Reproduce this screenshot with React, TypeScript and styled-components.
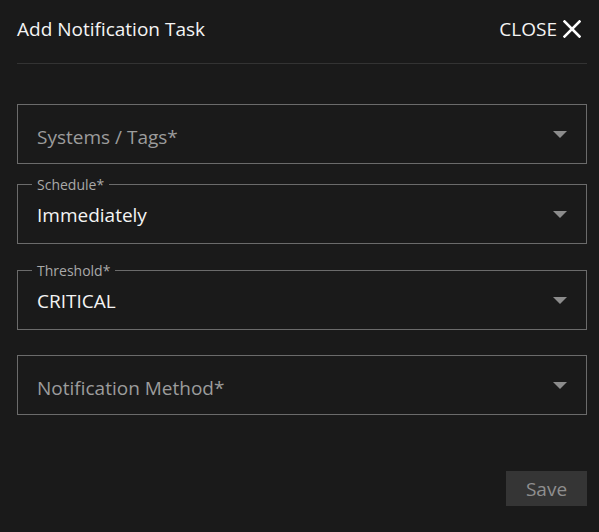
import React from 'react';
import styled, { createGlobalStyle } from 'styled-components';

const GlobalStyle = createGlobalStyle`
  html, body {
    margin: 0;
    padding: 0;
    background: #1a1a1a;
  }
  body {
    font-family: 'Open Sans', 'Noto Sans', sans-serif;
    color: #f2f2f2;
  }
`;

interface FieldProps {
  label?: string;
  placeholder: string;
  value?: string;
  top: number;
}

function SelectField({ label, placeholder, value, top }: FieldProps) {
  return (
    <FieldBox $top={top}>
      {label && <FloatingLabel>{label}</FloatingLabel>}
      <FieldText $filled={!!value}>{value || placeholder}</FieldText>
      <Caret viewBox="0 0 14 7" aria-hidden="true">
        <path d="M0 0h14L7 7z" fill="currentColor" />
      </Caret>
    </FieldBox>
  );
}

export default function App() {
  return (
    <>
      <GlobalStyle />
      <Dialog>
        <Header>
          <Title>Add Notification Task</Title>
          <CloseButton>
            CLOSE
            <CloseIcon viewBox="0 0 18 18" aria-hidden="true">
              <path
                d="M1.5 1.5l15 15M16.5 1.5l-15 15"
                stroke="currentColor"
                strokeWidth="2.6"
                strokeLinecap="square"
              />
            </CloseIcon>
          </CloseButton>
        </Header>
        <Form>
          <SelectField placeholder="Systems / Tags*" top={40} />
          <SelectField label="Schedule*" placeholder="Schedule*" value="Immediately" top={20} />
          <SelectField label="Threshold*" placeholder="Threshold*" value="CRITICAL" top={26} />
          <SelectField placeholder="Notification Method*" top={25} />
          <Actions>
            <SaveButton disabled>Save</SaveButton>
          </Actions>
        </Form>
      </Dialog>
    </>
  );
}

const Dialog = styled.div`
  width: 599px;
  height: 532px;
  box-sizing: border-box;
  padding: 0 12px 0 17px;
`;

const Header = styled.div`
  display: flex;
  align-items: center;
  justify-content: space-between;
  height: 58px;
  padding-bottom: 5px;
  border-bottom: 1px solid #333333;
`;

const Title = styled.h2`
  margin: 0;
  font-size: 19px;
  font-weight: 400;
  color: #f4f4f4;
`;

const CloseButton = styled.button`
  display: flex;
  align-items: center;
  gap: 6px;
  margin: 0 6px 0 0;
  padding: 0;
  border: none;
  background: none;
  font-family: inherit;
  font-size: 19px;
  color: #f4f4f4;
  cursor: pointer;
`;

const CloseIcon = styled.svg`
  width: 18px;
  height: 18px;
  color: #ffffff;
`;

const Form = styled.div`
  display: flex;
  flex-direction: column;
`;

const FieldBox = styled.div<{ $top: number }>`
  position: relative;
  display: flex;
  align-items: center;
  justify-content: space-between;
  height: 60px;
  box-sizing: border-box;
  margin-top: ${({ $top }) => $top}px;
  padding: 0 19px 0 19px;
  border: 1px solid #6b6b6b;
`;

const FloatingLabel = styled.span`
  position: absolute;
  top: -8px;
  left: 14px;
  padding: 0 5px;
  background: #1a1a1a;
  font-size: 14px;
  line-height: 16px;
  color: #a9a9a9;
`;

const FieldText = styled.span<{ $filled: boolean }>`
  font-size: 19px;
  color: ${({ $filled }) => ($filled ? '#f4f4f4' : '#9c9c9c')};
  margin-top: ${({ $filled }) => ($filled ? '2px' : '6px')};
`;

const Caret = styled.svg`
  width: 14px;
  height: 7px;
  color: #8c8c8c;
`;

const Actions = styled.div`
  display: flex;
  justify-content: flex-end;
  margin-top: 56px;
`;

const SaveButton = styled.button`
  width: 81px;
  height: 35px;
  border: none;
  background: #353535;
  font-family: inherit;
  font-size: 19px;
  color: #8f8f8f;
`;
